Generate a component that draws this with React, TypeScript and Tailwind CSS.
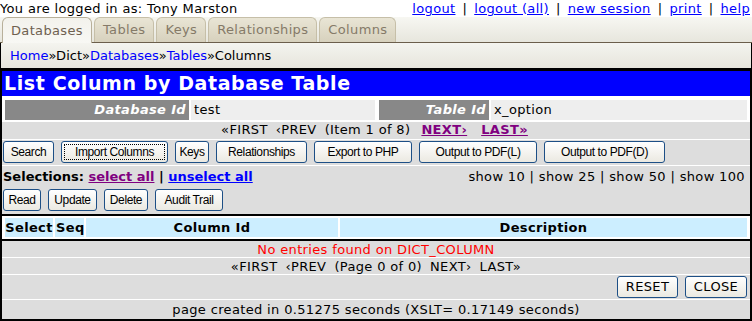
import React from "react";

const tabs = ["Databases", "Tables", "Keys", "Relationships", "Columns"];

const topLinks = ["logout", "logout (all)", "new session", "print", "help"];

const buttons = [
  { label: "Search", w: "w-[51px]" },
  { label: "Import Columns", w: "w-[107px]", focus: true },
  { label: "Keys", w: "w-[34px]" },
  { label: "Relationships", w: "w-[91px]" },
  { label: "Export to PHP", w: "w-[98px]" },
  { label: "Output to PDF(L)", w: "w-[118px]" },
  { label: "Output to PDF(D)", w: "w-[121px]" },
];

const actions = [
  { label: "Read", w: "w-[38px]" },
  { label: "Update", w: "w-[49px]" },
  { label: "Delete", w: "w-[44px]" },
  { label: "Audit Trail", w: "w-[68px]" },
];

function Btn({ label, w, focus }: { label: string; w: string; focus?: boolean }) {
  return (
    <button
      className={`${w} h-[22px] rounded-[3px] border border-[#1d4f86] bg-gradient-to-b from-white to-[#ebe9e1] text-[12px] text-black font-['Liberation_Sans',Arial,sans-serif] tracking-[-0.4px] whitespace-nowrap flex items-stretch`}
    >
      <span
        className={
          focus
            ? "flex-1 m-[2px] border border-dotted border-black flex items-center justify-center"
            : "flex-1 flex items-center justify-center"
        }
      >
        {label}
      </span>
    </button>
  );
}

export default function App() {
  return (
    <div className="w-[752px] h-[321px] bg-white font-['DejaVu_Sans',Verdana,sans-serif] text-[13px] tracking-[0.35px] text-black overflow-hidden">
      {/* Top line */}
      <div className="h-[17px] flex justify-between items-center leading-none">
        <span>You are logged in as: Tony Marston</span>
        <span className="flex gap-[7px] pr-[2px]">
          {topLinks.map((l, i) => (
            <React.Fragment key={l}>
              {i > 0 && <span>|</span>}
              <a className="text-[#0000ff] underline">{l}</a>
            </React.Fragment>
          ))}
        </span>
      </div>

      {/* Tabs */}
      <div className="h-[26px] flex items-end gap-[2px] pl-[2px] bg-gradient-to-b from-[#f7f7f2] to-[#e7e6dd] border-b border-[#6b5e4b]">
        {tabs.map((t, i) => (
          <div
            key={t}
            className={
              i === 0
                ? "h-[26px] -mb-px px-[8px] flex items-center rounded-t-[6px] border border-b-0 border-[#b8b09a] bg-gradient-to-b from-[#f3f2ec] to-[#f8f8f4] text-[#6f6150]"
                : "h-[25px] px-[8px] flex items-center rounded-t-[6px] border border-b-0 border-[#c6bfa8] bg-gradient-to-b from-[#e9e5d5] to-[#d7d1bd] text-[#857a68]"
            }
          >
            {t}
          </div>
        ))}
      </div>

      {/* Breadcrumb */}
      <div className="h-[26px] flex items-center pl-[9px] tracking-normal border-x border-b border-black bg-gradient-to-b from-[#f4f4ef] to-[#e6e5dc]">
        <a className="text-[#0000ff]">Home</a>»Dict»<a className="text-[#0000ff]">Databases</a>»
        <a className="text-[#0000ff]">Tables</a>»Columns
      </div>

      {/* Main */}
      <div className="h-[252px] border-2 border-black bg-[#dddddd] flex flex-col">
        <div className="h-[26px] bg-[#0000ff] text-white font-bold text-[19px] tracking-[0.6px] flex items-center pl-[2px] leading-none">
          List Column by Database Table
        </div>
        <div className="h-[2px] bg-white" />
        <div className="h-[24px] flex items-stretch gap-[2px] px-[3px] py-[2px] bg-white">
          <div className="w-[184px] bg-[#888888] text-white italic font-bold pr-[3px] flex items-center justify-end">
            Database Id
          </div>
          <div className="w-[184px] bg-[#eeeeee] pl-[3px] flex items-center">test</div>
          <div className="w-[110px] bg-[#888888] text-white italic font-bold pr-[3px] flex items-center justify-end ml-[2px]">
            Table Id
          </div>
          <div className="flex-1 bg-[#eeeeee] pl-[3px] flex items-center">x_option</div>
        </div>
        <div className="h-[18px] flex items-center justify-center gap-[8px] border-b border-white">
          <span>«FIRST</span>
          <span>‹PREV</span>
          <span>(Item 1 of 8)</span>
          <a className="text-[#800080] font-bold underline px-[3px]">NEXT›</a>
          <a className="text-[#800080] font-bold underline px-[3px]">LAST»</a>
        </div>
        <div className="h-[27px] flex items-center gap-[7px] pl-[1px] border-b border-white">
          {buttons.map((b) => (
            <Btn key={b.label} {...b} />
          ))}
        </div>
        <div className="h-[22px] flex items-center justify-between pl-[1px] pr-[5px]">
          <span className="font-bold tracking-normal">
            Selections: <a className="text-[#800080] underline">select all</a> |{" "}
            <a className="text-[#0000ff] underline">unselect all</a>
          </span>
          <span>show 10 | show 25 | show 50 | show 100</span>
        </div>
        <div className="h-[28px] flex items-center gap-[7px] pl-[1px]">
          {actions.map((b) => (
            <Btn key={b.label} {...b} />
          ))}
        </div>
        <div className="h-[2px] bg-black" />
        <div className="h-[24px] bg-white flex gap-[2px] px-[3px] py-[2px] font-bold">
          <div className="w-[48px] bg-[#cceeff] flex items-center justify-center">Select</div>
          <div className="w-[29px] bg-[#cceeff] flex items-center pl-[1px]">Seq</div>
          <div className="w-[252px] bg-[#cceeff] flex items-center justify-center">Column Id</div>
          <div className="flex-1 bg-[#cceeff] flex items-center justify-center">Description</div>
        </div>
        <div className="h-[2px] bg-black" />
        <div className="h-[17px] flex items-center justify-center text-[#ff0000] border-b border-white">
          No entries found on DICT_COLUMN
        </div>
        <div className="h-[17px] flex items-center justify-center gap-[8px] border-b border-white">
          <span>«FIRST</span>
          <span>‹PREV</span>
          <span>(Page 0 of 0)</span>
          <span>NEXT›</span>
          <span>LAST»</span>
        </div>
        <div className="h-[25px] flex items-center justify-end gap-[7px] pr-[3px] border-b border-white">
          <button className="w-[61px] h-[22px] rounded-[3px] border border-[#1d4f86] bg-gradient-to-b from-white to-[#ebe9e1] text-[13px]">
            RESET
          </button>
          <button className="w-[62px] h-[22px] rounded-[3px] border border-[#1d4f86] bg-gradient-to-b from-white to-[#ebe9e1] text-[13px]">
            CLOSE
          </button>
        </div>
        <div className="flex-1 flex items-center justify-center">
          page created in 0.51275 seconds (XSLT= 0.17149 seconds)
        </div>
      </div>
    </div>
  );
}
